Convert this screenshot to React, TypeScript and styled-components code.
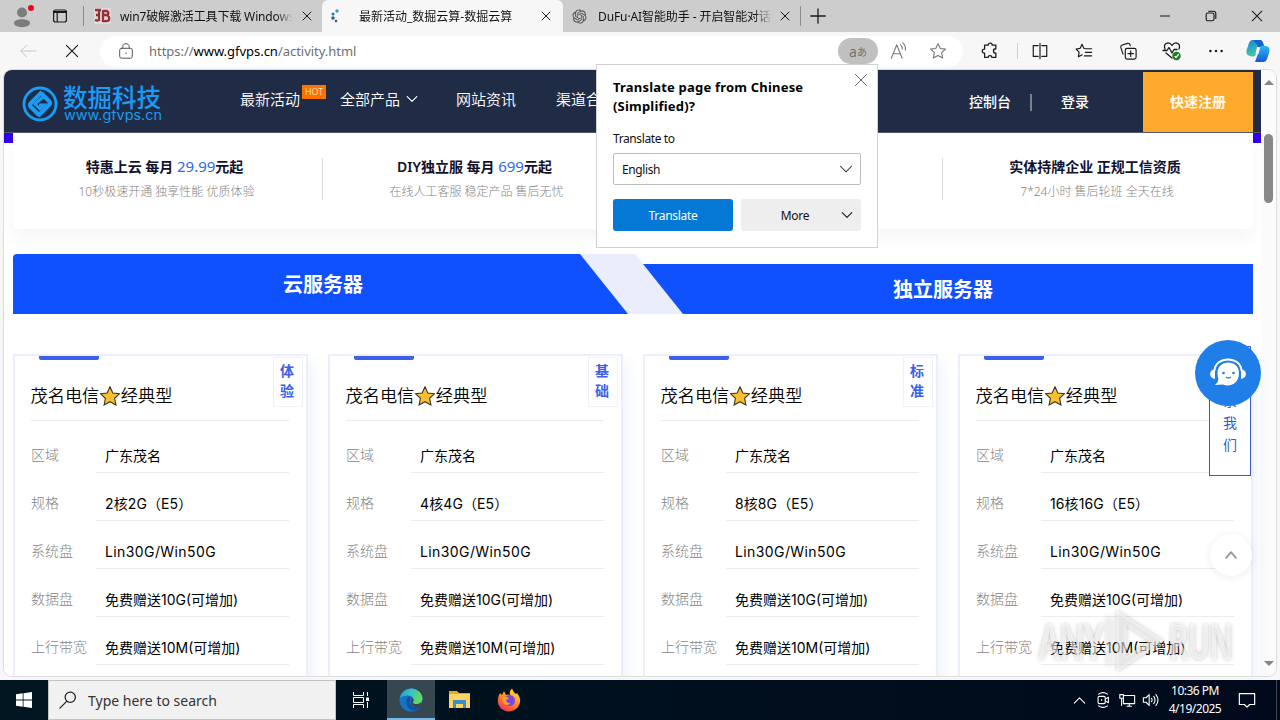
import type { ReactNode } from "react";
import styled, { createGlobalStyle, css } from "styled-components";
import { RiOpenaiFill } from "react-icons/ri";

const COLORS = {
  navy: "#202c46",
  blue: "#0f51ff",
  accent: "#3c60ea",
  orange: "#ffaa2d",
  logo: "#1a9bf5",
};

const FEATURES = [
  { before: "特惠上云 每月 ", price: "29.99", after: "元起", note: "10秒极速开通 独享性能 优质体验" },
  { before: "DIY独立服 每月 ", price: "699", after: "元起", note: "在线人工客服 稳定产品 售后无忧" },
  { before: "", price: "", after: "", note: "" },
  { before: "实体持牌企业 正规工信资质", price: "", after: "", note: "7*24小时 售后轮班 全天在线" },
];

const PLANS = [
  { badge: "体验", spec: "2核2G（E5）" },
  { badge: "基础", spec: "4核4G（E5）" },
  { badge: "标准", spec: "8核8G（E5）" },
  { badge: "", spec: "16核16G（E5）" },
];

const getRows = (spec: string) => [
  { label: "区域", value: "广东茂名", spacing: 0 },
  { label: "规格", value: spec, spacing: 0.1 },
  { label: "系统盘", value: "Lin30G/Win50G", spacing: 0.4 },
  { label: "数据盘", value: "免费赠送10G(可增加)", spacing: 0 },
  { label: "上行带宽", value: "免费赠送10M(可增加)", spacing: 0 },
];

type LineIconProps = {
  size: number;
  color?: string;
  width?: number;
  children: ReactNode;
};

const LineIcon = ({ size, color = "#1a1a1a", width = 1.1, children }: LineIconProps) => (
  <svg
    width={size}
    height={size}
    viewBox="0 0 20 20"
    fill="none"
    stroke={color}
    strokeWidth={width}
    strokeLinecap="round"
    strokeLinejoin="round"
  >
    {children}
  </svg>
);

const CloseIcon = ({ size, color, width }: { size: number; color?: string; width?: number }) => (
  <LineIcon size={size} color={color} width={width}>
    <path d="M2 2 18 18M18 2 2 18" />
  </LineIcon>
);

const ChevronIcon = ({ size, color, width }: { size: number; color?: string; width?: number }) => (
  <LineIcon size={size} color={color} width={width}>
    <path d="M2 6 10 14 18 6" />
  </LineIcon>
);

const STAR_PATH = "M10 1.8 12.5 7.2 18.3 7.9 14 11.9 15.2 17.8 10 14.9 4.8 17.8 6 11.9 1.7 7.9 7.5 7.2Z";
const PLAN_STAR_PATH = "M10 0.8 12.8 7 19.4 7.8 14.6 12.3 15.900 19 10 15.700 4.100 19 5.400 12.300 0.600 7.800 7.200 7Z";

const TabStrip = () => (
  <StyledTabStrip>
    <StyledSlot $width={44}>
      <svg width="24" height="24" viewBox="0 0 24 24">
        <circle cx="12" cy="8.5" r="5" fill="#7c7c7c" />
        <path d="M4 19c0-5 16-5 16 0 0 5.500-16 5.500-16 0Z" fill="#7c7c7c" />
        <circle cx="21" cy="4" r="3" fill="#e30b17" />
      </svg>
    </StyledSlot>
    <StyledSlot $width={32}>
      <LineIcon size={16} width={1.5}>
        <rect x="2" y="2.500" width="16" height="15" rx="2.500" />
        <path d="M2.500 5H17.500" strokeWidth="2.500" />
        <path d="M6.500 5V17" />
      </LineIcon>
    </StyledSlot>
    <StyledSlot $width={14}>
      <StyledDivider $height={20} $color="#8b8b8b" />
    </StyledSlot>
    <StyledTab $width={232}>
      <svg width="17" height="16" viewBox="0 0 17 16">
        <rect width="17" height="16" fill="#e2dada" />
        <path d="M1 2H7M5 3V12Q4 13 1 12M2 7H5M9 2V14M9 3H13Q15 4 14 7H9M12 7Q16 8 15 12 14 13.500 9 13" fill="none" stroke="#963138" strokeWidth="2.300" />
      </svg>
      <StyledTabTitle $left={9} $width={173} $spacing={-0.14}>
        win7破解激活工具下载 Windows
      </StyledTabTitle>
      <StyledTabClose $left={9}>
        <CloseIcon size={10} width={2} />
      </StyledTabClose>
    </StyledTab>
    <StyledTab $active $width={241}>
      <svg width="12" height="14" viewBox="0 0 12 14">
        <circle cx="7" cy="2" r="1.700" fill="#3b9ad0" />
        <circle cx="3" cy="5" r="1.500" fill="#2b78ac" />
        <circle cx="3" cy="9" r="1.700" fill="#245b83" />
        <circle cx="6" cy="12" r="1.300" fill="#245b83" />
      </svg>
      <StyledTabTitle $left={17} $width={173} $spacing={0}>
        最新活动_数掘云算-数掘云算
      </StyledTabTitle>
      <StyledTabClose $left={9}>
        <CloseIcon size={10} width={2} />
      </StyledTabClose>
    </StyledTab>
    <StyledTab $width={233}>
      <RiOpenaiFill size={17} color="#4a4a4a" />
      <StyledTabTitle $left={10} $width={174} $spacing={-0.1}>
        DuFu·AI智能助手 - 开启智能对话
      </StyledTabTitle>
      <StyledTabClose $left={8}>
        <CloseIcon size={10} width={2} />
      </StyledTabClose>
    </StyledTab>
    <StyledSlot $width={8}>
      <StyledDivider $height={20} $color="#8b8b8b" />
    </StyledSlot>
    <StyledSlot $width={28}>
      <LineIcon size={16} width={1.600}>
        <path d="M10 1V19M1 10H19" />
      </LineIcon>
    </StyledSlot>
    <StyledSpacer />
    <StyledSlot $width={46}>
      <LineIcon size={10} width={2}>
        <path d="M0 10H20" />
      </LineIcon>
    </StyledSlot>
    <StyledSlot $width={46}>
      <LineIcon size={12} width={1.900}>
        <rect x="2" y="5" width="13" height="13" rx="3" />
        <path d="M6 2H14C17 2 18 4 18 6V14" />
      </LineIcon>
    </StyledSlot>
    <StyledSlot $width={46}>
      <CloseIcon size={12} width={1.800} />
    </StyledSlot>
  </StyledTabStrip>
);

const Toolbar = () => (
  <StyledToolbar>
    <StyledSlot $width={56}>
      <LineIcon size={18} color="#c6c6c6">
        <path d="M19 10H2M8.500 3.500 2 10 8.500 16.500" />
      </LineIcon>
    </StyledSlot>
    <StyledSlot $width={32}>
      <CloseIcon size={14} width={1.600} />
    </StyledSlot>
    <StyledAddress>
      <LineIcon size={18} color="#555">
        <rect x="3" y="7" width="14" height="11" rx="2" />
        <path d="M6.500 7V5C6.500 0.800 13.500 0.800 13.500 5V7M10 12V13" />
      </LineIcon>
      <StyledUrl>
        https://<strong>www.gfvps.cn</strong>/activity.html
      </StyledUrl>
      <StyledTranslatePill>
        a<small>あ</small>
      </StyledTranslatePill>
      <StyledSlot $width={41}>
        <LineIcon size={18} color="#777" width={1.200}>
          <path d="M1.500 18 7.500 3 13.500 18M3.500 13H11.500M11.500 3Q14 5 13.500 8M14 1Q18 4 17 9" />
        </LineIcon>
      </StyledSlot>
      <StyledSlot $width={38}>
        <LineIcon size={18} color="#777" width={1.200}>
          <path d={STAR_PATH} />
        </LineIcon>
      </StyledSlot>
    </StyledAddress>
    <StyledSlot $width={54}>
      <LineIcon size={18} width={1.400}>
        <path d="M6 3.500H8C8 0.500 12.500 0.500 12.500 3.500H16.500V7.500C13 7.500 13 12.500 16.500 12.500V17H12C12 14.500 8 14.500 8 17H4V12.500C0.500 12.500 0.500 8 4 8V3.500Z" />
      </LineIcon>
    </StyledSlot>
    <StyledDivider $height={16} $color="#cfcfcf" />
    <StyledSlot $width={44}>
      <LineIcon size={18} width={1.300}>
        <path d="M8 4H2.500V16H8M12 4H17.500V16H12M10 1.500V18.500" />
      </LineIcon>
    </StyledSlot>
    <StyledSlot $width={44}>
      <LineIcon size={18} width={1.300}>
        <path d="M12 7.500 9.800 7 7.800 2.500 5.700 7 1.200 7.800 4.500 11.200 3.800 16.500 8 14.200M12 7.500H18.500M11.500 11.500H18.500M10.500 15.500H18.500" />
      </LineIcon>
    </StyledSlot>
    <StyledSlot $width={44}>
      <LineIcon size={18} width={1.300}>
        <rect x="7" y="7" width="12" height="12" rx="2" />
        <path d="M13 10V16M10 13H16M4.500 13.500 2 6Q1.500 4 3.500 3.300L9.500 1.500Q12 1 12.500 4" />
      </LineIcon>
    </StyledSlot>
    <StyledSlot $width={44}>
      <LineIcon size={20} width={1.300}>
        <path d="M3 8C0.500 2 7 0 10 4.500 13 0 19.500 2 17 8M4 12 10 17M1 9.500H5L7 6.500 10 12 12 8.500H15" />
        <circle cx="14.500" cy="15" r="4.200" fill="#187a18" stroke="none" />
        <path d="M13 15.500 14 16.500 16.500 13.500" stroke="#fff" />
      </LineIcon>
    </StyledSlot>
    <StyledSlot $width={44}>
      <LineIcon size={16} width={0}>
        <g fill="#222">
          <circle cx="3" cy="10" r="1.600" />
          <circle cx="10" cy="10" r="1.600" />
          <circle cx="17" cy="10" r="1.600" />
        </g>
      </LineIcon>
    </StyledSlot>
    <StyledSlot $width={40}>
      <svg width="24" height="24" viewBox="0 0 24 24">
        <defs>
          <linearGradient id="copilotLeft" x1="0" y1="0" x2="0.300" y2="1">
            <stop offset="0" stopColor="#1587d6" />
            <stop offset="1" stopColor="#43c9a4" />
          </linearGradient>
          <linearGradient id="copilotRight" x1="0" y1="0" x2="0" y2="1">
            <stop offset="0" stopColor="#2fb9f6" />
            <stop offset="1" stopColor="#1459d8" />
          </linearGradient>
        </defs>
        <path d="M7 1H15L10 15C9 18 7 18 4 17 0 16 0 13 1 10L3 4Q4 1 7 1Z" fill="url(#copilotLeft)" />
        <path d="M17 23H9L14 9C15 6 17 6 20 7 24 8 24 11 23 14L21 20Q20 23 17 23Z" fill="url(#copilotRight)" />
        <path d="M7 1H15Q17 2 18 7 15 6 13 10L12 14 10 15 12 7Z" fill="#1264d4" />
        <path d="M11 8 14 8 12.500 15 9.500 15Z" fill="#f7f7f7" />
      </svg>
    </StyledSlot>
  </StyledToolbar>
);

const SiteHeader = () => (
  <StyledHeader>
    <StyledLogo>
      <svg width="36" height="38" viewBox="0 0 36 38" fill="none" stroke={COLORS.logo}>
        <circle cx="18" cy="19" r="16" strokeWidth="2.800" />
        <path d="M20 7 9 18Q7 20 9 22L17 30M16 31 27 20Q29 18 27 16L19 8" strokeWidth="4.200" />
        <path d="M21 12 13 19 18 24 22 20H17" strokeWidth="3" />
      </svg>
      <StyledLogoText>
        <b>数掘科技</b>
        <svg width="100" height="14">
          <text x="1" y="10" textLength="98" lengthAdjust="spacingAndGlyphs" fill={COLORS.logo} fontFamily="Inter, sans-serif" fontSize="13">
            www.gfvps.cn
          </text>
        </svg>
      </StyledLogoText>
    </StyledLogo>
    <StyledNavItem $left={78}>
      最新活动
      <StyledHot>HOT</StyledHot>
    </StyledNavItem>
    <StyledNavItem $left={40}>
      全部产品
      <ChevronIcon size={12} color="#fff" width={2} />
    </StyledNavItem>
    <StyledNavItem $left={38}>网站资讯</StyledNavItem>
    <StyledNavItem $left={40}>渠道合作</StyledNavItem>
    <StyledSpacer />
    <StyledAccountLink>控制台</StyledAccountLink>
    <StyledDivider $height={17} $color="#79818f" $wide />
    <StyledAccountLink>登录</StyledAccountLink>
    <StyledRegister>快速注册</StyledRegister>
  </StyledHeader>
);

const PlanCard = ({ badge, spec }: (typeof PLANS)[number]) => (
  <StyledCard>
    <StyledCardAccent />
    {badge && <StyledCardBadge>{badge}</StyledCardBadge>}
    <StyledCardTitle>
      茂名电信
      <svg width="20" height="20" viewBox="0 0 20 20">
        <path d={PLAN_STAR_PATH} fill="#fbc02f" stroke="#3d3420" strokeWidth="1.100" />
      </svg>
      经典型
    </StyledCardTitle>
    {getRows(spec).map(({ label, value, spacing }) => (
      <StyledCardRow key={label}>
        <StyledCardLabel>{label}</StyledCardLabel>
        <StyledCardValue $spacing={spacing}>{value}</StyledCardValue>
      </StyledCardRow>
    ))}
  </StyledCard>
);

const TranslatePopup = () => (
  <StyledPopup>
    <StyledPopupHead>
      <StyledPopupTitle>
        Translate page from Chinese
        <br />
        (Simplified)?
      </StyledPopupTitle>
      <CloseIcon size={14} color="#555" width={1.300} />
    </StyledPopupHead>
    <StyledPopupLabel>Translate to</StyledPopupLabel>
    <StyledSelect>
      English
      <ChevronIcon size={14} color="#444" width={1.500} />
    </StyledSelect>
    <StyledPopupActions>
      <StyledPopupButton $primary>Translate</StyledPopupButton>
      <StyledPopupButton>
        <span>More</span>
        <ChevronIcon size={12} color="#222" width={1.900} />
      </StyledPopupButton>
    </StyledPopupActions>
  </StyledPopup>
);

const Watermark = () => (
  <StyledWatermark width="212" height="76" viewBox="0 0 212 76">
    <g fill="#fff" fillOpacity="0.550" stroke="#fff" strokeOpacity="0.400" fontFamily="Open Sans, sans-serif" fontWeight="600" fontSize="47">
      <text x="10" y="54" textLength="64" lengthAdjust="spacingAndGlyphs">
        ANY
      </text>
      <text x="140" y="54" textLength="64" lengthAdjust="spacingAndGlyphs">
        RUN
      </text>
      <path d="M88 6 134 36 88 66ZM97 20V52L121 36Z" fillRule="evenodd" />
      <path d="M80 12V60" strokeWidth="5" />
    </g>
  </StyledWatermark>
);

const Taskbar = () => (
  <StyledTaskbar>
    <StyledSlot $width={48}>
      <svg width="16" height="16" viewBox="0 0 16 16" fill="#fff">
        <path d="M0 2.300 6.700 1.300V7.600H0ZM7.500 1.200 16 0V7.600H7.500ZM0 8.400H6.700V14.700L0 13.700ZM7.500 8.400H16V16L7.500 14.800Z" />
      </svg>
    </StyledSlot>
    <StyledSearch>
      <LineIcon size={18} width={1.400} color="#222">
        <circle cx="12.500" cy="7" r="5.700" />
        <path d="M8.500 11.500 1 19" />
      </LineIcon>
      Type here to search
    </StyledSearch>
    <StyledSlot $width={48}>
      <svg width="17" height="18" viewBox="0 0 17 18" fill="none" stroke="#fff">
        <path d="M1.500 1V4.500H11.500V1M1.500 17V13.500H11.500V17M1.500 6.500H11.500V11.500H1.500ZM15.500 1V5M15.500 11V17" />
        <rect x="14.500" y="7" width="2" height="2.500" fill="#fff" />
      </svg>
    </StyledSlot>
    <StyledTaskbarApp $active>
      <svg width="24" height="24" viewBox="0 0 24 24">
        <defs>
          <linearGradient id="edgeTop" x1="0" y1="0" x2="1" y2="0.400">
            <stop offset="0" stopColor="#2490d8" />
            <stop offset="0.500" stopColor="#36c3c5" />
            <stop offset="1" stopColor="#66d95a" />
          </linearGradient>
        </defs>
        <circle cx="12" cy="12" r="11.500" fill="#1873c8" />
        <path d="M0.600 11C2 4 7 0.500 12 0.500 19 0.500 23.500 6 23.500 10.500 23.500 14 20.500 16 17.500 16 14 16 13 15 14.300 13.500 15.500 11.500 14 7.500 9 7.500 5 7.500 1.500 9 0.600 11Z" fill="url(#edgeTop)" />
        <path d="M9 9C6 13 7 21 14 22.500 18 22.500 21 20 22 18 17 20 11 18 11 13 11 11 12 10 12.500 9.500 11.500 8.500 10 8.500 9 9Z" fill="#14529f" />
        <path d="M14.300 13.500C13 15 14 16 17.500 16 20 16 21.500 15.400 22.500 14.500V18.500C17 20 12 18 12 13.500 12 12 12.500 11 13.500 10.300 14.700 11 15 12.500 14.300 13.500Z" fill="#37474f" />
      </svg>
    </StyledTaskbarApp>
    <StyledTaskbarApp>
      <svg width="22" height="20" viewBox="0 0 22 20">
        <path d="M0 1H8L10 3H21V18H0Z" fill="#e9a824" />
        <path d="M0 4H21V18H0Z" fill="#fcd462" />
        <path d="M4 18V10H17V18H14V14H7V18Z" fill="#3a8fd3" />
      </svg>
    </StyledTaskbarApp>
    <StyledTaskbarApp>
      <svg width="24" height="24" viewBox="0 0 24 24">
        <defs>
          <linearGradient id="foxBody" x1="0.800" y1="0" x2="0.200" y2="1">
            <stop offset="0" stopColor="#ffe146" />
            <stop offset="0.500" stopColor="#ff8a1f" />
            <stop offset="1" stopColor="#f22a62" />
          </linearGradient>
        </defs>
        <path d="M3 5 5 7 7 3 9 7Q11 6 13 7 12 3 15 0.500 16 4 19 6L20 5Q24 10 23 14C22 20 17 23.500 12 23.500 5 23.500 0.500 18 0.800 12Q1 8 3 5Z" fill="url(#foxBody)" />
        <circle cx="12.500" cy="12.500" r="5.500" fill="#7a48e0" />
        <path d="M5 10Q9 7 12 10.500L9 12Q10 16 14 15 9 19 6 15Z" fill="#ff9b2a" />
      </svg>
    </StyledTaskbarApp>
    <StyledSpacer />
    <StyledSlot $width={24}>
      <LineIcon size={13} color="#fff" width={1.600}>
        <path d="M2 14 10 6 18 14" />
      </LineIcon>
    </StyledSlot>
    <StyledSlot $width={24}>
      <LineIcon size={18} color="#fff" width={1.200}>
        <rect x="4.500" y="6" width="8" height="8" rx="1.500" />
        <path d="M12.500 9 16 7V13L12.500 11M5 3.500Q10 0 15 3.500M5 16.500Q10 20 15 16.500M8.500 9.500V10.500" />
      </LineIcon>
    </StyledSlot>
    <StyledSlot $width={24}>
      <LineIcon size={18} color="#fff" width={1.200}>
        <path d="M6 5H18.500V14H6V9M10 17H15M12.500 14V17M2 4H6V8H2ZM4 8V16" />
      </LineIcon>
    </StyledSlot>
    <StyledSlot $width={24}>
      <LineIcon size={18} color="#fff" width={1.200}>
        <path d="M1.500 7.500H4.500L8 4V16L4.500 12.500H1.500ZM10.500 8Q12 10 10.500 12M13 6Q16 10 13 14M15.500 4Q20 10 15.500 16" />
      </LineIcon>
    </StyledSlot>
    <StyledClock>
      <span>10:36 PM</span>
      <span>4/19/2025</span>
    </StyledClock>
    <StyledSlot $width={50}>
      <LineIcon size={18} color="#fff" width={1.300}>
        <path d="M1.500 3H18.500V15H13L10 18 7 15H1.500Z" />
      </LineIcon>
    </StyledSlot>
    <StyledSlot $width={8}>
      <StyledDivider $height={40} $color="#3d444c" />
    </StyledSlot>
  </StyledTaskbar>
);

const App = () => (
  <StyledDesktop>
    <GlobalStyle />
    <TabStrip />
    <Toolbar />
    <StyledViewport>
      <StyledPage>
        <SiteHeader />
        <StyledFeatureBand>
          <StyledFeatures>
            {FEATURES.map(({ before, price, after, note }, index) => (
              <StyledFeature key={index}>
                <StyledFeatureTitle>
                  {before}
                  <span>{price}</span>
                  {after}
                </StyledFeatureTitle>
                <StyledFeatureNote>{note}</StyledFeatureNote>
              </StyledFeature>
            ))}
          </StyledFeatures>
        </StyledFeatureBand>
        <StyledServerTabs>
          <StyledServerTab $first>云服务器</StyledServerTab>
          <StyledServerTab>独立服务器</StyledServerTab>
        </StyledServerTabs>
        <StyledPlans>
          {PLANS.map((plan) => (
            <PlanCard key={plan.spec} {...plan} />
          ))}
        </StyledPlans>
      </StyledPage>
      <StyledScrollbar>
        <StyledScrollArrow />
        <StyledScrollThumb />
        <StyledSpacer />
        <StyledScrollArrow $down />
      </StyledScrollbar>
    </StyledViewport>
    <Taskbar />
    <StyledContact>
      <span>系</span>
      <span>我</span>
      <span>们</span>
    </StyledContact>
    <StyledSupport>
      <svg width="36" height="32" viewBox="0 0 36 32">
        <path d="M4.500 14C5-1.500 31-1.500 31.500 14" fill="none" stroke="#fff" strokeWidth="2" />
        <path d="M5 12V22C-1.500 21-1.500 13 5 12ZM31 12V22C37.500 21 37.500 13 31 12Z" fill="#fff" />
        <path d="M7.500 16C7.500 2 29 2 29 16 29 28 18 30 13 27.500L5 28Q8.500 25 8.500 22 7.500 20 7.500 16Z" fill="#fff" />
        <circle cx="13.500" cy="16" r="1.300" fill="#1f7ee8" />
        <circle cx="23.500" cy="16" r="1.300" fill="#1f7ee8" />
        <path d="M16 20Q18.500 22 21 20" fill="none" stroke="#1f7ee8" strokeWidth="1.300" />
      </svg>
    </StyledSupport>
    <StyledBackTop>
      <LineIcon size={14} color="#999" width={2.800}>
        <path d="M3 14 10 6 17 14" />
      </LineIcon>
    </StyledBackTop>
    <Watermark />
    <TranslatePopup />
  </StyledDesktop>
);

const GlobalStyle = createGlobalStyle`
  * {
    box-sizing: border-box;
  }

  body {
    margin: 0;
    overflow: hidden;
    font-family: "Noto Sans", "Noto Sans CJK SC", sans-serif;
  }

  svg {
    flex: none;
  }
`;

const StyledDesktop = styled.div`
  position: relative;
  display: flex;
  flex-direction: column;
  width: 1280px;
  height: 720px;
  overflow: hidden;
  background: #f7f7f7;
  white-space: nowrap;
`;

const StyledSpacer = styled.div`
  flex: 1;
`;

const StyledSlot = styled.div<{ $width: number }>`
  display: flex;
  flex: none;
  align-items: center;
  justify-content: center;
  width: ${({ $width }) => $width}px;
`;

const StyledDivider = styled.div<{ $height: number; $color: string; $wide?: boolean }>`
  flex: none;
  width: ${({ $wide }) => ($wide ? 2 : 1)}px;
  height: ${({ $height }) => $height}px;
  background: ${({ $color }) => $color};
`;

const StyledTabStrip = styled.div`
  display: flex;
  flex: none;
  align-items: center;
  height: 32px;
  background: #cdcdcd;
`;

const StyledTab = styled.div<{ $width: number; $active?: boolean }>`
  display: flex;
  flex: none;
  align-items: center;
  width: ${({ $width }) => $width}px;
  height: 32px;
  padding-left: ${({ $active }) => ($active ? 8 : 4)}px;

  ${({ $active }) =>
    $active
      ? css`
          background: #f7f7f7;
          border-radius: 6px 6px 0 0;
        `
      : css`
          &:nth-of-type(6) {
            padding-left: 8px;
          }
        `}
`;

const StyledTabTitle = styled.div<{ $left: number; $width: number; $spacing: number }>`
  flex: none;
  width: ${({ $width }) => $width}px;
  margin-left: ${({ $left }) => $left}px;
  overflow: hidden;
  color: #111;
  font-size: 12px;
  letter-spacing: ${({ $spacing }) => $spacing}px;
  mask-image: linear-gradient(90deg, #000 90%, transparent);
`;

const StyledTabClose = styled.div<{ $left: number }>`
  display: flex;
  margin-left: ${({ $left }) => $left}px;
`;

const StyledToolbar = styled.div`
  display: flex;
  flex: none;
  align-items: center;
  height: 38px;
  background: #f7f7f7;
`;

const StyledAddress = styled.div`
  display: flex;
  align-items: center;
  width: 863px;
  height: 31px;
  margin-left: 12px;
  padding: 0 6px 0 17px;
  background: #fff;
  border-radius: 16px;
`;

const StyledUrl = styled.div`
  flex: 1;
  margin-left: 14px;
  color: #707070;
  font-size: 13px;
  letter-spacing: -0.03px;

  strong {
    color: #000;
    font-weight: 400;
  }
`;

const StyledTranslatePill = styled.div`
  display: flex;
  align-items: center;
  justify-content: center;
  width: 40px;
  height: 26px;
  color: #707070;
  font-size: 14px;
  background: #c0c0c0;
  border-radius: 13px;

  small {
    font-size: 10px;
  }
`;

const StyledViewport = styled.div`
  display: flex;
  flex: none;
  width: 1272px;
  height: 606px;
  margin: 0 0 4px 4px;
  overflow: hidden;
  background: #fff;
  border-radius: 8px;
  box-shadow: 0 0 0 1px #dcdcdc;
`;

const StyledPage = styled.div`
  width: 1257px;
  background: #fff;
`;

const StyledHeader = styled.header`
  display: flex;
  align-items: center;
  height: 63px;
  padding: 2px 8px 0 18px;
  color: #fff;
  background: ${COLORS.navy};
  border-bottom: 1px solid #50586a;
`;

const StyledLogo = styled.div`
  display: flex;
  align-items: center;
  width: 140px;
  margin-top: 4px;
`;

const StyledLogoText = styled.div`
  display: flex;
  flex-direction: column;
  width: 100px;
  margin: 0 0 0 5px;
  color: ${COLORS.logo};

  b {
    height: 25px;
    font-size: 24.5px;
    font-weight: 500;
    line-height: 25px;
  }
`;

const StyledNavItem = styled.div<{ $left: number }>`
  position: relative;
  display: flex;
  align-items: center;
  gap: 6px;
  margin: 0 0 7px ${({ $left }) => $left}px;
  font-size: 15px;
  font-weight: 350;
`;

const StyledHot = styled.span`
  position: absolute;
  top: -3px;
  left: 62px;
  width: 24px;
  height: 14px;
  font-size: 9px;
  line-height: 14px;
  text-align: center;
  background: #ff7200;
`;

const StyledAccountLink = styled.div`
  padding: 0 19px 2px;
  font-size: 14px;
  font-weight: 500;

  & + div + & {
    padding: 0 54px 2px 29px;
  }
`;

const StyledRegister = styled.div`
  width: 110px;
  height: 60px;
  color: #fffbea;
  font-size: 14px;
  font-weight: 700;
  line-height: 60px;
  text-align: center;
  background: ${COLORS.orange};
`;

const StyledFeatureBand = styled.div`
  height: 121px;
  padding: 0 8px 0 9px;
  background: linear-gradient(#2f00f0, #2f00f0) no-repeat 0 0 / 100% 10px;
`;

const StyledFeatures = styled.div`
  display: flex;
  height: 96px;
  background: #fff;
  border-radius: 0 0 6px 6px;
  box-shadow: 0 10px 16px rgba(0, 0, 0, 0.04);
`;

const StyledFeature = styled.div`
  display: flex;
  flex: none;
  flex-direction: column;
  align-items: center;
  width: 310px;
  height: 42px;
  margin-top: 25px;
  padding-right: 6px;
  border-right: 1px solid #dcdcdc;

  &:last-child {
    border-right: 0;
  }
`;

const StyledFeatureTitle = styled.div`
  margin-top: -1px;
  color: #12122e;
  font-size: 14px;
  font-weight: 600;
  line-height: 18px;

  span {
    color: #2a6bdf;
    font-size: 15px;
    font-weight: 400;
  }
`;

const StyledFeatureNote = styled.div`
  margin-top: 6px;
  padding-left: 4px;
  color: #848484;
  font-size: 12px;
  font-weight: 300;
  line-height: 20px;
`;

const StyledServerTabs = styled.div`
  display: flex;
  height: 60px;
  margin: 0 8px 0 9px;
  background: #e9edfc;
  border-radius: 4px 0 0 0;
  clip-path: polygon(0 0, 622px 0, 630px 10px, 100% 10px, 100% 100%, 0 100%);
`;

const StyledServerTab = styled.div<{ $first?: boolean }>`
  flex: none;
  width: 620px;
  height: ${({ $first }) => ($first ? 60 : 50)}px;
  margin-top: ${({ $first }) => ($first ? 0 : 10)}px;
  color: #fff;
  font-size: 20px;
  font-weight: 700;
  line-height: ${({ $first }) => ($first ? 62 : 52)}px;
  text-align: center;
  background: ${COLORS.blue};
  border-radius: ${({ $first }) => ($first ? "4px 0 0 0" : 0)};
  clip-path: ${({ $first }) =>
    $first ? "polygon(0 0, 567px 0, 615px 100%, 0 100%)" : "polygon(10px 0, 100% 0, 100% 100%, 50px 100%)"};
`;

const StyledPlans = styled.div`
  display: flex;
  gap: 20px;
  padding: 40px 9px 0;
`;

const StyledCard = styled.div`
  position: relative;
  flex: none;
  width: 295px;
  height: 340px;
  padding: 0 16px;
  background: #fff;
  border: 2px solid #ebeefc;
  box-shadow: 6px 8px 12px rgba(90, 130, 240, 0.08);
`;

const StyledCardAccent = styled.div`
  width: 60px;
  height: 4px;
  margin-left: 8px;
  background: ${COLORS.accent};
  border-radius: 0 0 2px 2px;
`;

const StyledCardBadge = styled.div`
  position: absolute;
  top: 1px;
  right: 3px;
  width: 30px;
  height: 50px;
  padding: 3px 8px 3px 6px;
  color: ${COLORS.accent};
  font-size: 14px;
  font-weight: 600;
  line-height: 20px;
  white-space: normal;
  border: 1px solid #f0f2fb;
`;

const StyledCardTitle = styled.div`
  display: flex;
  align-items: center;
  height: 61px;
  margin: 0 1px 11px 0;
  padding-top: 9px;
  font-size: 17.2px;
  font-weight: 350;
  text-indent: -0.5px;
  border-bottom: 1px solid #ececf0;

  svg {
    margin: 2px 1px 0;
  }
`;

const StyledCardRow = styled.div`
  display: flex;
  height: 48px;
  line-height: 48px;
`;

const StyledCardLabel = styled.div`
  width: 65px;
  color: #848484;
  font-size: 14px;
  font-weight: 300;
  line-height: 46px;
`;

const StyledCardValue = styled.div<{ $spacing: number }>`
  width: 193px;
  height: 41px;
  padding-left: 9px;
  font-family: Inter, "Noto Sans CJK SC", sans-serif;
  font-size: 14px;
  letter-spacing: ${({ $spacing }) => $spacing}px;
  border-bottom: 1px solid #ececec;
`;

const StyledScrollbar = styled.div`
  display: flex;
  flex-direction: column;
  align-items: center;
  width: 15px;
  padding: 10px 0;
  background: #fbfbfb;
`;

const StyledScrollArrow = styled.div<{ $down?: boolean }>`
  border: 5px solid transparent;
  border-top-width: ${({ $down }) => ($down ? 5 : 0)}px;
  border-bottom-width: ${({ $down }) => ($down ? 0 : 5)}px;
  border-top-color: ${({ $down }) => ($down ? "#858585" : "transparent")};
  border-bottom-color: ${({ $down }) => ($down ? "transparent" : "#858585")};
`;

const StyledScrollThumb = styled.div`
  width: 9px;
  height: 69px;
  margin-top: 49px;
  background: #888;
  border-radius: 5px;
`;

const StyledContact = styled.div`
  position: absolute;
  top: 346px;
  left: 1209px;
  display: flex;
  flex-direction: column;
  align-items: center;
  justify-content: flex-end;
  width: 42px;
  height: 130px;
  padding-bottom: 19px;
  color: #3260d2;
  font-size: 14px;
  line-height: 22px;
  background: #fff;
  border: 1px solid #3a5bcd;
`;

const StyledSupport = styled.div`
  position: absolute;
  top: 340px;
  left: 1195px;
  display: flex;
  align-items: center;
  justify-content: center;
  width: 66px;
  height: 66px;
  background: #1f7ee8;
  border-radius: 50%;
`;

const StyledBackTop = styled.div`
  position: absolute;
  top: 534px;
  left: 1210px;
  display: flex;
  align-items: center;
  justify-content: center;
  width: 42px;
  height: 42px;
  background: #fff;
  border-radius: 50%;
  box-shadow: 0 1px 8px rgba(0, 0, 0, 0.08);
`;

const StyledWatermark = styled.svg`
  position: absolute;
  top: 605px;
  left: 1029px;
  filter: drop-shadow(0 0 2px rgba(0, 0, 0, 0.4));
`;

const StyledPopup = styled.div`
  position: absolute;
  top: 64px;
  left: 596px;
  width: 282px;
  height: 184px;
  padding: 13px 16px;
  color: #111;
  font-size: 12px;
  background: #fff;
  border: 1px solid #d2d2d2;
`;

const StyledPopupHead = styled.div`
  display: flex;
  justify-content: space-between;

  svg {
    margin: -5px -7px 0 0;
  }
`;

const StyledPopupTitle = styled.div`
  color: #000;
  font-size: 13px;
  font-weight: 700;
  line-height: 19px;
  letter-spacing: 0.2px;
`;

const StyledPopupLabel = styled.div`
  margin-top: 14px;
  line-height: 18px;
  letter-spacing: -0.4px;
`;

const StyledSelect = styled.div`
  display: flex;
  align-items: center;
  justify-content: space-between;
  height: 32px;
  margin-top: 5px;
  padding: 0 7px 0 8px;
  letter-spacing: -0.4px;
  border: 1px solid #bdbdbd;
  border-radius: 2px;
`;

const StyledPopupActions = styled.div`
  display: flex;
  gap: 8px;
  margin-top: 14px;
`;

const StyledPopupButton = styled.div<{ $primary?: boolean }>`
  display: flex;
  flex: 1;
  align-items: center;
  justify-content: center;
  height: 32px;
  color: ${({ $primary }) => ($primary ? "#fff" : "#111")};
  letter-spacing: -0.3px;
  background: ${({ $primary }) => ($primary ? "#0578d6" : "#eee")};
  border-radius: 3px;

  span {
    margin: 0 32px 0 32px;
  }
`;

const StyledTaskbar = styled.div`
  display: flex;
  flex: none;
  height: 40px;
  background: linear-gradient(90deg, #011620, #000a1c);
`;

const StyledSearch = styled.div`
  display: flex;
  align-items: center;
  gap: 11px;
  width: 288px;
  padding-left: 10px;
  color: #333;
  font-size: 14px;
  background: #f1f1f1;
  border: 1px solid #c3c3c3;
`;

const StyledTaskbarApp = styled.div<{ $active?: boolean }>`
  display: flex;
  align-items: center;
  justify-content: center;
  width: 48px;
  margin-left: ${({ $active }) => ($active ? 3 : 1)}px;
  background: ${({ $active }) => ($active ? "#37474f" : "transparent")};
  box-shadow: ${({ $active }) => ($active ? "inset 0 -2px #76b9ed" : "none")};
`;

const StyledClock = styled.div`
  display: flex;
  flex-direction: column;
  align-items: center;
  width: 59px;
  padding: 2px 0 0 5px;
  color: #fff;
  font-size: 12px;
  line-height: 18px;
  letter-spacing: -0.5px;
`;

export default App;
